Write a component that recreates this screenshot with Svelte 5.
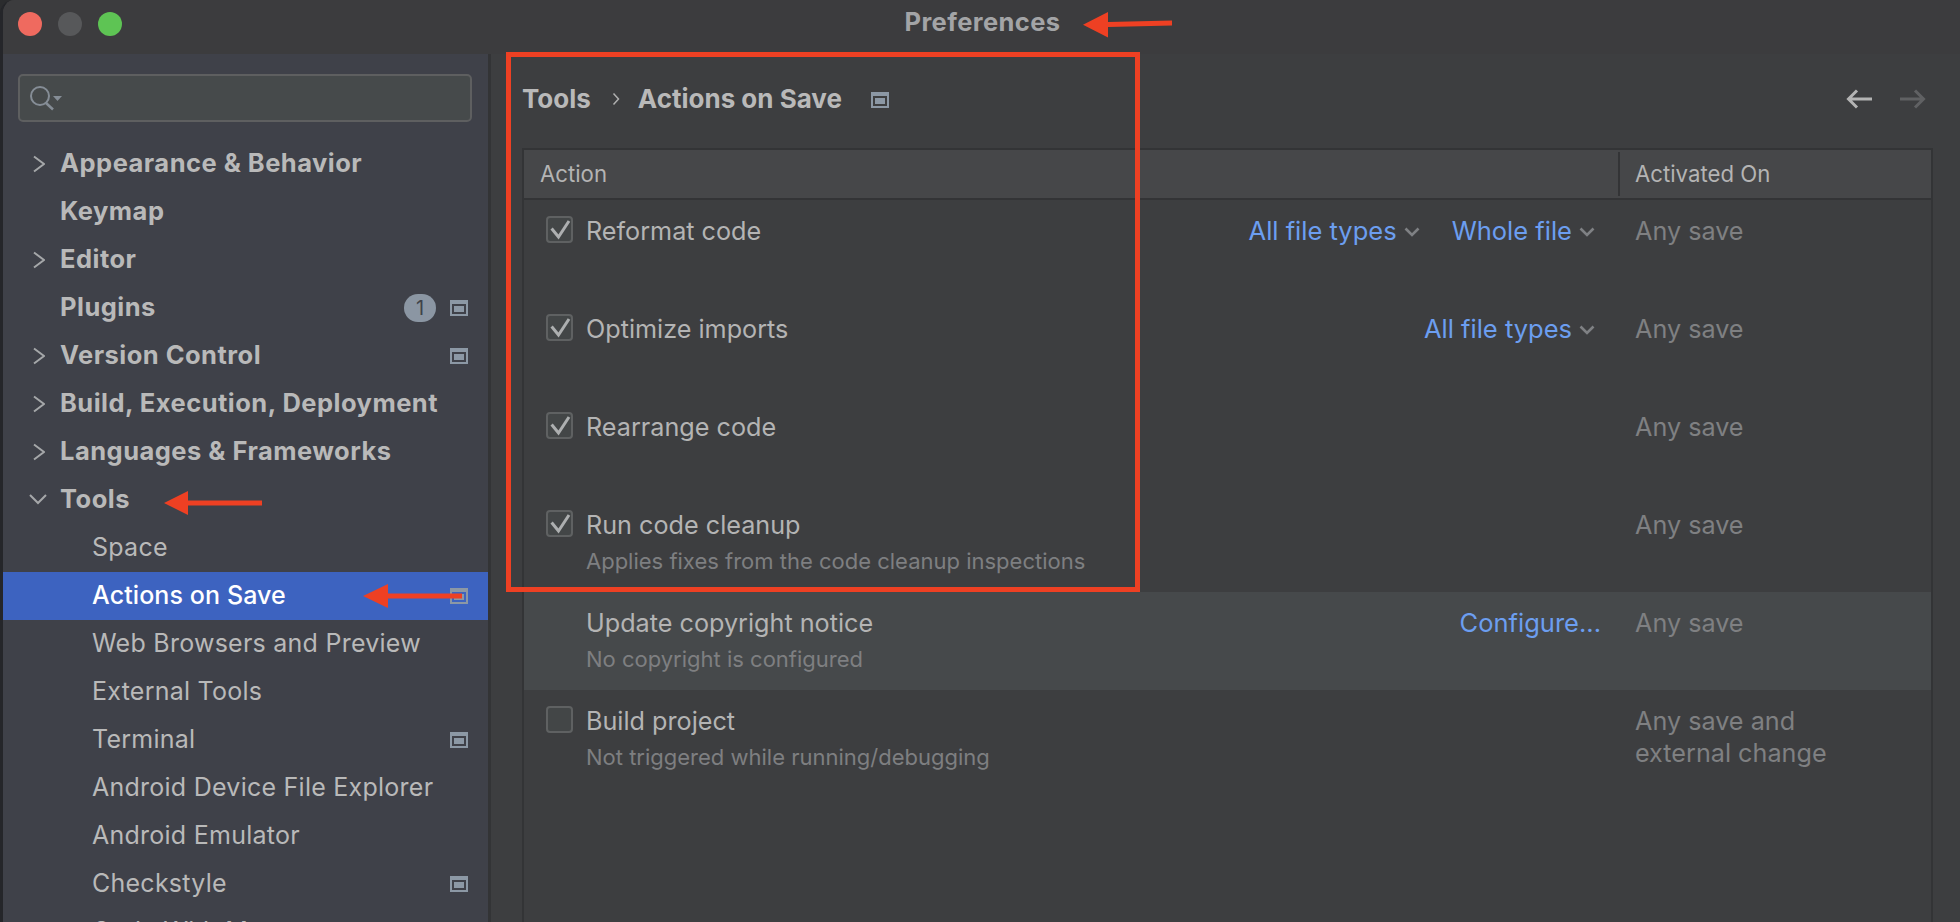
<script>
  const tree = [
    { label: 'Appearance & Behavior', arrow: 'right', bold: true },
    { label: 'Keymap', bold: true },
    { label: 'Editor', arrow: 'right', bold: true },
    { label: 'Plugins', bold: true, badge: '1', icon: true },
    { label: 'Version Control', arrow: 'right', bold: true, icon: true },
    { label: 'Build, Execution, Deployment', arrow: 'right', bold: true },
    { label: 'Languages & Frameworks', arrow: 'right', bold: true },
    { label: 'Tools', arrow: 'down', bold: true },
    { label: 'Space' },
    { label: 'Actions on Save', selected: true, icon: true },
    { label: 'Web Browsers and Preview' },
    { label: 'External Tools' },
    { label: 'Terminal', icon: true },
    { label: 'Android Device File Explorer' },
    { label: 'Android Emulator' },
    { label: 'Checkstyle', icon: true },
    { label: 'Code With Me' }
  ];

  const actions = [
    { label: 'Reformat code', checked: true, on: 'Any save', links: ['All file types', 'Whole file'] },
    { label: 'Optimize imports', checked: true, on: 'Any save', links: ['All file types'] },
    { label: 'Rearrange code', checked: true, on: 'Any save', links: [] },
    { label: 'Run code cleanup', sub: 'Applies fixes from the code cleanup inspections', checked: true, on: 'Any save', links: [] },
    { label: 'Update copyright notice', sub: 'No copyright is configured', on: 'Any save', links: [], configure: true, hover: true, nobox: true },
    { label: 'Build project', sub: 'Not triggered while running/debugging', checked: false, on: 'Any save and\nexternal change', links: [] }
  ];
</script>

{#snippet projIcon()}
  <svg class="proj" width="18" height="16" viewBox="0 0 18 16" aria-hidden="true">
    <path fill-rule="evenodd" fill="#8c98a5" d="M0 0h18v16H0zM2 4v10h14V4z" />
    <rect x="4" y="6" width="10" height="6" fill="#8c98a5" />
  </svg>
{/snippet}

<div class="window">
  <header class="titlebar">
    <div class="lights">
      <span class="light red"></span>
      <span class="light grey"></span>
      <span class="light green"></span>
    </div>
    <span class="title">Preferences</span>
  </header>

  <div class="body">
    <aside class="sidebar">
      <div class="search">
        <svg width="34" height="26" viewBox="0 0 34 26" aria-hidden="true">
          <circle cx="10" cy="10" r="9" fill="none" stroke="#858d96" stroke-width="2" />
          <path d="M16 17l7 6.500" stroke="#858d96" stroke-width="2.500" fill="none" />
          <path d="M23 10h9l-4.500 5z" fill="#858d96" />
        </svg>
      </div>
      <nav class="tree">
        {#each tree as item}
          <div class="row" class:bold={item.bold} class:selected={item.selected} class:child={!item.bold}>
            {#if item.arrow === 'right'}
              <svg class="caret" width="12" height="18" viewBox="0 0 12 18" aria-hidden="true"><path d="M1 1.500L11 9 1 16.500" fill="none" stroke="#a5a7a9" stroke-width="2" /></svg>
            {:else if item.arrow === 'down'}
              <svg class="caret down" width="18" height="12" viewBox="0 0 18 12" aria-hidden="true"><path d="M1 2l8 8 8-8" fill="none" stroke="#a5a7a9" stroke-width="2" /></svg>
            {/if}
            <span class="label">{item.label}</span>
            {#if item.badge}<span class="badge">{item.badge}</span>{/if}
            {#if item.icon}{@render projIcon()}{/if}
          </div>
        {/each}
      </nav>
    </aside>

    <main class="content">
      <div class="crumbs">
        <span class="crumb">Tools</span>
        <svg class="sep" width="8" height="14" viewBox="0 0 8 14" aria-hidden="true"><path d="M1.500 1.500L6.500 7l-5 5.500" fill="none" stroke="#b0b0b0" stroke-width="1.500" /></svg>
        <span class="crumb">Actions on Save</span>
        {@render projIcon()}
        <div class="nav">
          <svg width="26" height="20" viewBox="0 0 26 20" aria-hidden="true"><path d="M26 10H3M11 1.500L2.500 10l8.500 8.500" fill="none" stroke="#b4b4b4" stroke-width="3" /></svg>
          <svg width="26" height="20" viewBox="0 0 26 20" aria-hidden="true"><path d="M0 10h23M15 1.500l8.500 8.500-8.500 8.500" fill="none" stroke="#606163" stroke-width="3" /></svg>
        </div>
      </div>

      <div class="table">
        <div class="thead">
          <div class="th action">Action</div>
          <div class="th on">Activated On</div>
        </div>
        {#each actions as a}
          <div class="tr" class:hover={a.hover}>
            <div class="cell-box">
              {#if !a.nobox}
                <span class="box">
                  {#if a.checked}
                    <svg width="23" height="23" viewBox="0 0 23 23" aria-hidden="true"><path d="M3.600 10.500L10.500 19 21 3" fill="none" stroke="#adafb0" stroke-width="3" /></svg>
                  {/if}
                </span>
              {/if}
            </div>
            <div class="cell-main">
              <div class="name">{a.label}</div>
              {#if a.sub}<div class="sub">{a.sub}</div>{/if}
            </div>
            <div class="cell-links">
              {#each a.links as l}
                <span class="link">{l}<svg width="16" height="10" viewBox="0 0 16 10" aria-hidden="true"><path d="M1.500 1.500L8 8l6.500-6.500" fill="none" stroke="#7f8184" stroke-width="2.600" /></svg></span>
              {/each}
              {#if a.configure}<span class="link configure">Configure...</span>{/if}
            </div>
            <div class="cell-on">{a.on}</div>
          </div>
        {/each}
      </div>
    </main>
  </div>

  <div class="mark rect"></div>
  <svg class="mark arrows" width="1960" height="922" viewBox="0 0 1960 922" aria-hidden="true">
    <g fill="#ee4023">
      <path d="M1083 24.700l25-12.700v10l64-1.500v5l-64 1.500v10.500z" />
      <path d="M164 503l24-12v9.500h74v5h-74v9.500z" />
      <path d="M363 596l25-12v9.500h74v5h-74v9.500z" />
    </g>
  </svg>
</div>

<style>
  :global(body) {
    margin: 0;
    background: #2b2c2e;
    overflow: hidden;
  }

  .window {
    position: relative;
    width: 1960px;
    height: 922px;
    overflow: hidden;
    background: #3d3e40;
    border-left: 3px solid #25262a;
    box-sizing: border-box;
    border-top-left-radius: 14px;
    font-family: Inter, "Liberation Sans", sans-serif;
    color: #bbbbbb;
  }

  .titlebar {
    position: relative;
    height: 54px;
    display: flex;
    align-items: center;
    justify-content: center;
    background: #3c3c3e;
  }

  .lights {
    position: absolute;
    left: 15px;
    top: 12px;
    display: flex;
    gap: 16px;
  }

  .light {
    width: 24px;
    height: 24px;
    border-radius: 50%;
  }

  .red { background: #ef6a5f; }
  .grey { background: #57585a; }
  .green { background: #5ec454; }

  .title {
    font-size: 25.500px;
    letter-spacing: 0.400px;
    font-weight: 700;
    color: #a3a4a6;
    margin-left: 2px;
    margin-top: -11px;
  }

  .body {
    display: flex;
    height: 868px;
  }

  .sidebar {
    width: 485px;
    flex: none;
    background: #3f4149;
    border-right: 3px solid #333436;
    overflow: hidden;
  }

  .search {
    margin: 20px 15px 0;
    height: 44px;
    width: 450px;
    border: 2px solid #5e5f60;
    border-radius: 5px;
    background: #464a4b;
    display: flex;
    align-items: center;
  }

  .search svg {
    margin-left: 10px;
    margin-top: 2px;
  }

  .tree {
    margin-top: 18px;
  }

  .row {
    position: relative;
    height: 48px;
    box-sizing: border-box;
    display: flex;
    align-items: center;
    padding: 0 20px 2px 57px;
    font-size: 25.500px;
    letter-spacing: 0.480px;
    color: #b9b9b9;
    white-space: nowrap;
  }

  .row.child {
    padding-left: 89px;
    font-size: 25px;
    letter-spacing: 0.250px;
    font-weight: 400;
  }

  .row.bold {
    font-weight: 700;
    padding-bottom: 4px;
  }

  .row.selected {
    background: #3d63c0;
    color: #ffffff;
    font-weight: 500;
    letter-spacing: 0.100px;
  }

  .caret {
    position: absolute;
    left: 30px;
    top: 15px;
  }

  .caret.down {
    left: 26px;
    top: 17px;
  }

  .label {
    flex: 1;
  }

  .badge {
    width: 32px;
    height: 28px;
    border-radius: 14px;
    background: #8b96a3;
    color: #40434a;
    font-size: 20px;
    font-weight: 400;
    letter-spacing: 0;
    text-align: center;
    line-height: 28px;
    margin-right: 14px;
    margin-top: 4px;
  }

  .proj {
    flex: none;
    display: block;
  }

  .row .proj {
    margin-top: 2px;
  }

  .row.bold .proj {
    margin-top: 4px;
  }

  .content {
    flex: 1;
    min-width: 0;
    padding-left: 31px;
    padding-right: 27px;
  }

  .crumbs {
    height: 94px;
    box-sizing: border-box;
    padding-bottom: 5px;
    display: flex;
    align-items: center;
    font-size: 26px;
    font-weight: 700;
    color: #b9b9b9;
  }

  .sep {
    margin: 0 18px 0 21px;
  }

  .crumbs .proj {
    margin-left: 29px;
    margin-top: 2px;
  }

  .nav {
    margin-left: auto;
    display: flex;
    gap: 28px;
    margin-right: 7px;
  }

  .table {
    height: 800px;
    border: 2px solid #333436;
    border-bottom: none;
  }

  .thead {
    height: 48px;
    display: flex;
    align-items: center;
    background: #464749;
    border-bottom: 2px solid #333436;
    font-size: 22.200px;
    color: #b4b4b4;
  }

  .th.action {
    flex: 1;
    padding-left: 16px;
    margin-top: -1px;
  }

  .th.on {
    width: 313px;
    height: 44px;
    display: flex;
    align-items: center;
    box-sizing: border-box;
    border-left: 2px solid #333436;
    padding: 0 0 2px 15px;
  }

  .tr {
    height: 98px;
    display: flex;
    font-size: 25.200px;
  }

  .tr.hover {
    background: #46494b;
  }

  .cell-box {
    width: 62px;
    flex: none;
    padding: 16px 0 0 22px;
    box-sizing: border-box;
  }

  .box {
    display: flex;
    align-items: center;
    justify-content: center;
    width: 27px;
    height: 27px;
    box-sizing: border-box;
    border: 2px solid #5f6162;
    border-radius: 4px;
    background: #434647;
  }

  .cell-main {
    flex: 1;
    min-width: 0;
    padding-top: 15px;
  }

  .name {
    line-height: 32px;
    color: #b4b4b4;
  }

  .sub {
    font-size: 22px;
    line-height: 27px;
    margin-top: 7px;
    color: #7e7f81;
  }

  .cell-links {
    display: flex;
    align-items: flex-start;
    justify-content: flex-end;
    gap: 32px;
    padding: 15px 23px 0 0;
    line-height: 32px;
  }

  .link {
    color: #6c9ef0;
    display: flex;
    align-items: center;
    gap: 7px;
    font-size: 25.500px;
  }

  .link svg {
    margin-top: 2px;
  }

  .configure {
    margin-right: -6px;
    display: block;
  }

  .cell-on {
    width: 313px;
    flex: none;
    box-sizing: border-box;
    padding: 15px 0 0 17px;
    line-height: 32px;
    color: #7f8082;
    white-space: pre-line;
  }

  .mark {
    position: absolute;
  }

  .rect {
    left: 503px;
    top: 52px;
    width: 634px;
    height: 540px;
    box-sizing: border-box;
    border: 5px solid #ee4023;
  }

  .arrows {
    left: -3px;
    top: 0;
  }
</style>
